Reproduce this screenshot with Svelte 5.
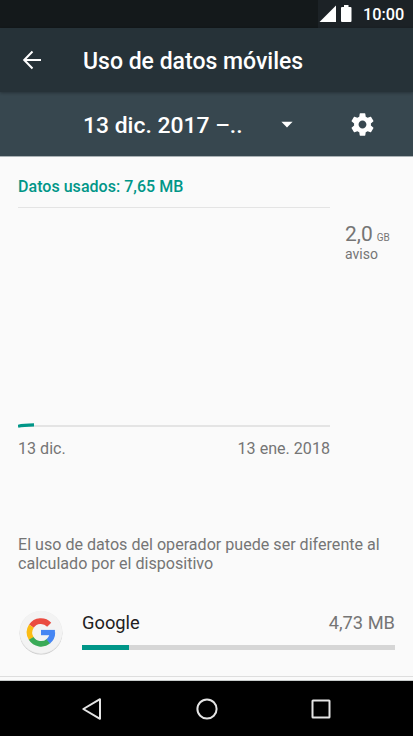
<script lang="ts">
  const usage = {
    total: '7,65 MB',
    start: '13 dic.',
    end: '13 ene. 2018',
    warning: '2,0',
  };

  const apps = [{ name: 'Google', amount: '4,73 MB', percent: 15 }];
</script>

<div class="screen">
  <div class="statusbar">
    <div class="status-icons">
      <svg width="34" height="22" viewBox="0 0 34 22" fill="#fff">
        <path d="M.5 22L17 5.5V22Z" />
        <path d="M22 8Q22 7 23 7H25V5H29.5V7H31.5Q32.5 7 32.5 8V21Q32.5 22 31.5 22H23Q22 22 22 21Z" />
      </svg>
      <span class="clock">10:00</span>
    </div>
  </div>

  <header class="toolbar">
    <button class="icon-button back" aria-label="Atrás">
      <svg width="20" height="20" viewBox="0 0 20 20" fill="none" stroke="#fff" stroke-width="2">
        <path d="M19 10H2.5M10.5 1.5L2.2 10L10.5 18.5" />
      </svg>
    </button>
    <h1>Uso de datos móviles</h1>
  </header>

  <div class="cycle">
    <button class="spinner">
      <span class="period">13 dic. 2017 –..</span>
      <svg width="12" height="7" viewBox="0 0 12 7"><path d="M.4 .7H11.6L6 6.4Z" fill="#fff" /></svg>
    </button>
    <button class="icon-button settings" aria-label="Ajustes">
      <svg width="27" height="27" viewBox="0 0 24 24" fill="#fff">
        <path d="M19.43 12.98c.04-.32.07-.64.07-.98s-.03-.66-.07-.98l2.11-1.65c.19-.15.24-.42.12-.64l-2-3.46c-.12-.22-.39-.3-.61-.22l-2.49 1c-.52-.4-1.08-.73-1.69-.98l-.38-2.65C14.46 2.18 14.25 2 14 2h-4c-.25 0-.46.18-.49.42l-.38 2.65c-.61.25-1.17.59-1.69.98l-2.49-1c-.23-.09-.49 0-.61.22l-2 3.46c-.13.22-.07.49.12.64l2.11 1.65c-.04.32-.07.65-.07.98s.03.66.07.98l-2.11 1.65c-.19.15-.24.42-.12.64l2 3.46c.12.22.39.3.61.22l2.49-1c.52.4 1.08.73 1.69.98l.38 2.65c.03.24.24.42.49.42h4c.25 0 .46-.18.49-.42l.38-2.65c.61-.25 1.17-.59 1.69-.98l2.49 1c.23.09.49 0 .61-.22l2-3.46c.12-.22.07-.49-.12-.64l-2.11-1.65zM12 15.5c-1.93 0-3.5-1.57-3.5-3.5s1.57-3.5 3.5-3.5 3.5 1.57 3.5 3.5-1.57 3.5-3.5 3.5z" />
      </svg>
    </button>
  </div>

  <main>
    <p class="total">Datos usados: {usage.total}</p>

    <div class="chart-row">
      <div class="chart">
        <svg width="17" height="5" viewBox="0 0 17 5" fill="none">
          <path d="M0 3.3Q5 1.9 16 1.8" stroke="#009688" stroke-width="3.2" />
        </svg>
      </div>
      <div class="limit">
        <div class="limit-value"><span class="number">{usage.warning}</span> <span class="unit">GB</span></div>
        <div class="limit-label">aviso</div>
      </div>
    </div>

    <div class="axis">
      <span>{usage.start}</span>
      <span>{usage.end}</span>
    </div>

    <p class="note">El uso de datos del operador puede ser diferente al<br />calculado por el dispositivo</p>

    {#each apps as app}
      <div class="app">
        <svg class="logo" width="46" height="48" viewBox="0 0 46 48" fill="none">
          <circle cx="23" cy="24.3" r="21.3" fill="#c9c9c9" />
          <circle cx="23" cy="23.5" r="21.5" fill="#e6e6e6" />
          <circle cx="23" cy="23" r="21.2" fill="#f3f3f3" />
          <g stroke-width="5.6" transform="translate(0 -.6)">
            <path d="M13.4 17.7A11.5 11.5 0 0 1 31.2 16.3" stroke="#ea4b40" />
            <path d="M13.4 30.3A11.5 11.5 0 0 1 13.4 17.7" stroke="#fbbc14" />
            <path d="M30.6 32.6A11.5 11.5 0 0 1 13.2 30" stroke="#3aaa57" />
            <path d="M34.4 24A11.5 11.5 0 0 1 30.2 32.9" stroke="#4686f3" />
          </g>
          <path d="M23 20.9H36.9V26.2H23Z" fill="#4686f3" />
        </svg>
        <div class="app-body">
          <div class="app-line">
            <span class="app-name">{app.name}</span>
            <span class="app-amount">{app.amount}</span>
          </div>
          <div class="bar"><div class="fill" style="width: {app.percent}%"></div></div>
        </div>
      </div>
    {/each}
  </main>

  <nav>
    <svg width="22" height="24" viewBox="0 0 22 24"><path d="M19 2.2V21.8L2.3 12Z" /></svg>
    <svg width="24" height="24" viewBox="0 0 24 24"><circle cx="12" cy="12" r="9.6" /></svg>
    <svg width="22" height="24" viewBox="0 0 22 24"><rect x="2.5" y="3.5" width="17" height="17" rx=".5" /></svg>
  </nav>
</div>

<style>
  :global(body) {
    margin: 0;
  }

  .screen {
    width: 413px;
    height: 736px;
    display: flex;
    flex-direction: column;
    overflow: hidden;
    background: #fafafa;
    color: #757575;
    font-family: Roboto, sans-serif;
  }

  .statusbar {
    height: 28px;
    flex-shrink: 0;
    display: flex;
    justify-content: flex-end;
    background: #14191b;
  }

  .status-icons {
    width: 95px;
    display: flex;
    background: #1c2226;
  }

  .status-icons svg {
    margin-left: 1px;
  }

  .clock {
    margin-left: 10px;
    color: #fff;
    font-size: 16.3px;
    font-weight: 500;
    line-height: 29px;
  }

  .toolbar {
    height: 64px;
    flex-shrink: 0;
    display: flex;
    align-items: center;
    background: #263238;
    box-shadow: 0 1px 3px rgba(0, 0, 0, 0.3);
    z-index: 1;
  }

  .icon-button,
  .spinner {
    display: flex;
    align-items: center;
    padding: 0;
    border: 0;
    background: none;
    color: #fff;
    font: inherit;
  }

  .back {
    margin-left: 22px;
  }

  h1 {
    margin: 3px 0 0 41px;
    color: #fff;
    font-size: 23px;
    font-weight: 500;
    line-height: 30px;
    white-space: nowrap;
  }

  .cycle {
    height: 65px;
    flex-shrink: 0;
    display: flex;
    align-items: center;
    box-sizing: border-box;
    padding-left: 83px;
    background: #37474f;
    border-bottom: 1px solid #aab2b5;
  }

  .spinner {
    width: 210px;
    justify-content: space-between;
  }

  .period {
    margin-top: 4px;
    font-size: 22.9px;
    font-weight: 500;
    line-height: 30px;
    white-space: nowrap;
  }

  .settings {
    margin-left: 56px;
  }

  main {
    flex: 1;
    padding: 0 18px;
    border-bottom: 1px solid #dedede;
    margin-bottom: 4px;
  }

  p {
    margin: 0;
  }

  .total {
    height: 50px;
    box-sizing: border-box;
    padding-top: 20px;
    color: #009688;
    font-size: 16px;
    font-weight: 500;
    line-height: 19px;
    letter-spacing: 0.03px;
  }

  .chart-row {
    display: flex;
    height: 220px;
  }

  .chart {
    width: 312px;
    box-sizing: border-box;
    display: flex;
    align-items: flex-end;
    border-top: 1px solid #e4e4e4;
    border-bottom: 2px solid #e4e4e4;
  }

  .chart svg {
    margin-bottom: -3px;
  }

  .limit {
    margin-left: 15px;
    padding-top: 14px;
  }

  .limit-value {
    height: 25px;
    line-height: 26px;
    white-space: nowrap;
  }

  .number {
    font-size: 21px;
  }

  .unit {
    font-size: 10px;
  }

  .limit-label {
    font-size: 14px;
    line-height: 16px;
  }

  .axis {
    width: 312px;
    display: flex;
    justify-content: space-between;
    margin-top: 12px;
    font-size: 16.1px;
    line-height: 20px;
  }

  .note {
    margin-top: 76px;
    font-size: 16.1px;
    line-height: 19px;
    white-space: nowrap;
  }

  .app {
    display: flex;
    margin-top: 36px;
  }

  .logo {
    flex-shrink: 0;
  }

  .app-body {
    flex: 1;
    margin-left: 18px;
  }

  .app-line {
    display: flex;
    justify-content: space-between;
    font-size: 18.3px;
    line-height: 24px;
    margin-top: 2px;
  }

  .app-name {
    color: #212121;
  }

  .bar {
    height: 5px;
    margin-top: 10px;
    background: #d6d6d6;
  }

  .fill {
    height: 100%;
    background: #009688;
  }

  nav {
    height: 55px;
    flex-shrink: 0;
    display: flex;
    justify-content: space-between;
    align-items: center;
    box-sizing: border-box;
    padding: 0 81px;
    background: #000;
    box-shadow: 0 -1px 0 #c8cccb;
  }

  nav svg {
    fill: none;
    stroke: #e4e4e4;
    stroke-width: 2;
    stroke-linejoin: round;
  }
</style>
